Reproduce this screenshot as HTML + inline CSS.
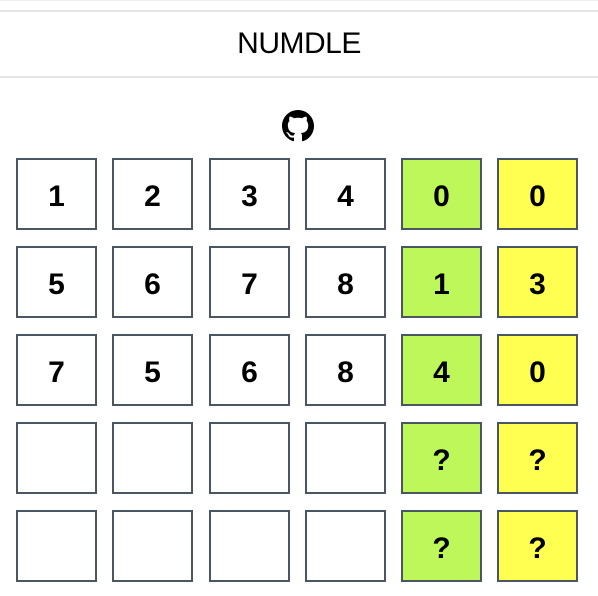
<!DOCTYPE html>
<html><head><meta charset="utf-8"><style>
body{margin:0;width:598px;height:596px;background:#fff;font-family:"Liberation Sans",sans-serif;position:relative;overflow:hidden}
.l{position:absolute;left:0;width:598px;height:2px;background:#e5e5ea}
.t{position:absolute;top:27px;width:598px;text-align:center;font-size:30px;color:#000;letter-spacing:-0.5px}
.b{position:absolute;width:77px;height:68px;border:2px solid #4b5563;display:flex;align-items:center;justify-content:center;font-weight:bold;font-size:30px;color:#000;box-sizing:content-box;padding-top:0}
.b span{position:relative;top:3px}
.g{background:#bef75a}.y{background:#ffff52}
</style></head><body>
<div class="l" style="top:0;height:1px;background:#eee"></div>
<div class="l" style="top:10px"></div>
<div class="t">NUMDLE</div>
<div class="l" style="top:76px"></div>
<svg style="position:absolute;left:282px;top:110px" width="32" height="32" viewBox="0 0 16 16"><path fill="#000" d="M8 0C3.580 0 0 3.58 0 8c0 3.54 2.29 6.53 5.47 7.590.4.07.55-.17.55-.38 0-.19-.01-.82-.01-1.490-2.01.37-2.53-.49-2.690-.94-.09-.23-.48-.94-.82-1.130-.28-.15-.68-.52-.01-.53.63-.01 1.08.58 1.23.82.72 1.21 1.87.87 2.33.66.07-.52.28-.87.51-1.070-1.780-.2-3.640-.89-3.640-3.950 0-.87.31-1.590.82-2.150-.08-.2-.36-1.020.08-2.120 0 0 .67-.21 2.2.82.64-.18 1.32-.27 2-.27.68 0 1.36.09 2 .27 1.53-1.040 2.2-.82 2.2-.82.44 1.1.16 1.92.08 2.12.51.56.82 1.27.82 2.15 0 3.07-1.87 3.75-3.65 3.95.29.25.54.73.54 1.48 0 1.07-.01 1.93-.01 2.2 0 .21.15.46.55.38A8.013 8.013 0 0016 8c0-4.42-3.58-8-8-8z"/></svg>
<div id="grid"></div>
<script>
var rows=[["1","2","3","4","0","0"],["5","6","7","8","1","3"],["7","5","6","8","4","0"],["","","","","?","?"],["","","","","?","?"]];
var xs=[16,112,209,305,401,497],ys=[158,246,334,422,510],h="";
rows.forEach(function(r,i){r.forEach(function(v,j){h+='<div class="b'+(j==4?' g':j==5?' y':'')+'" style="left:'+xs[j]+'px;top:'+ys[i]+'px"><span>'+v+'</span></div>';});});
document.getElementById("grid").innerHTML=h;
</script>
</body></html>
